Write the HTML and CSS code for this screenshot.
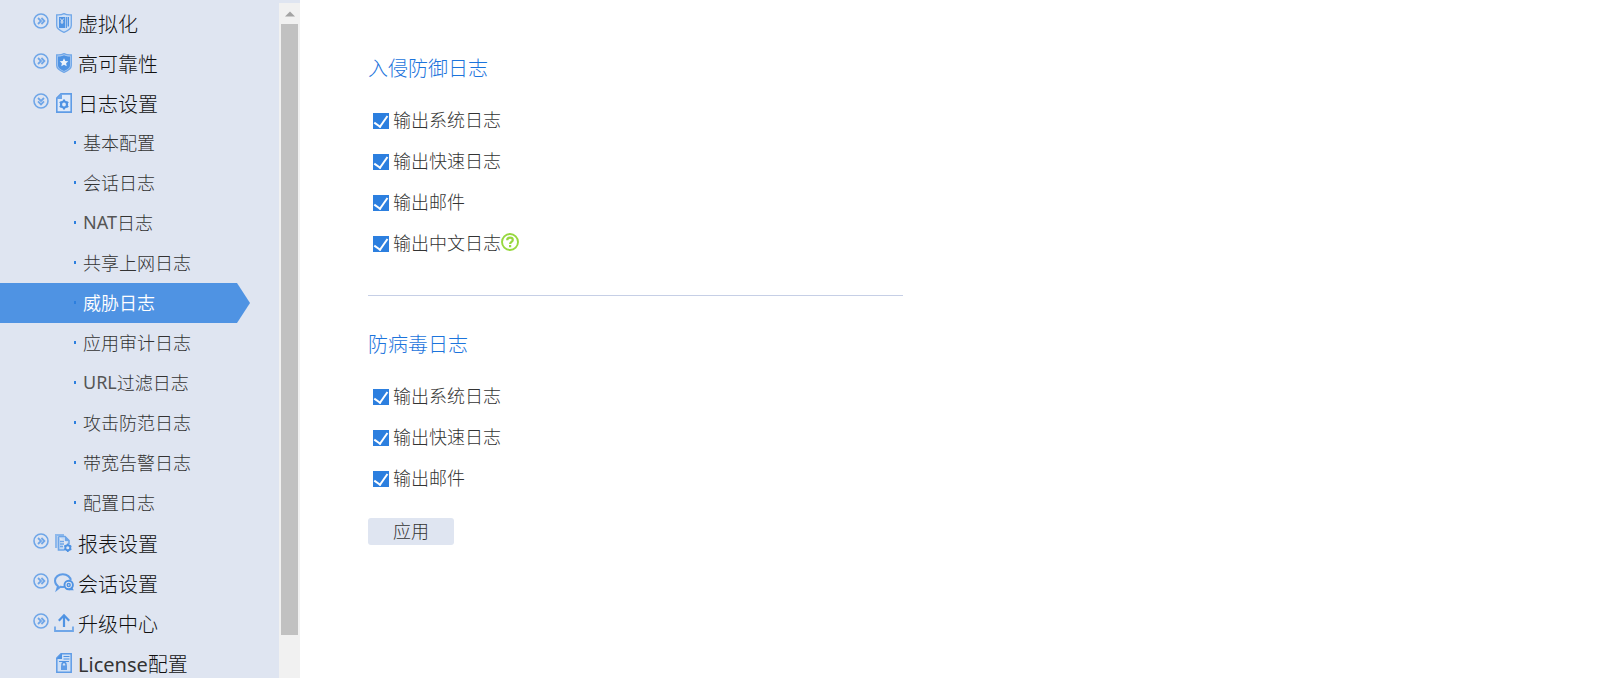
FILE: index.html
```html
<!DOCTYPE html>
<html lang="zh-CN">
<head>
  <meta charset="UTF-8">
  <meta name="viewport" content="width=device-width, initial-scale=1.0">
  <title>威胁日志</title>
  <link rel="stylesheet" href="styles.css">
</head>
<body>
  <!-- shared icons -->
  <svg class="defs" aria-hidden="true">
    <symbol id="more" viewBox="0 0 16 16">
      <circle cx="8" cy="8" r="7" fill="none" stroke="currentColor" stroke-width="1.600"/>
      <path d="M5 5l3 3-3 3M8.400 5l3 3-3 3" fill="none" stroke="currentColor" stroke-width="1.800"/>
    </symbol>
  </svg>

  <div class="page">
    <aside class="sidebar">
      <nav class="menu">
        <ul>
          <li><a class="group" href="#">
            <svg class="arrow"><use href="#more"/></svg>
            <svg class="icon" viewBox="0 0 20 20"><path d="M10 .7c2.400 1.200 4.800 1.400 7.300 1.200v10.600c0 3.200-3.600 5.400-7.300 6.900-3.700-1.500-7.300-3.700-7.300-6.900V1.900C5.200 2.100 7.600 1.900 10 .7z" fill="#cfe0f6" stroke="#6fa6e8" stroke-width="1.300"/><path d="M5 4h6v11H5zM11.700 4h1.200v11h-1.200zM13.600 4H15v9.500h-1.400z" fill="#4f93e3"/><path d="M6.300 5.500L8 8l1.700-2.500M8 8v3M6.500 9h3" stroke="#dfe5f1" fill="none"/></svg>
            <span>虚拟化</span></a></li>
          <li><a class="group" href="#">
            <svg class="arrow"><use href="#more"/></svg>
            <svg class="icon" viewBox="0 0 20 20"><path d="M10 .7c2.400 1.200 4.800 1.400 7.300 1.200v10.600c0 3.200-3.600 5.400-7.300 6.900-3.700-1.500-7.300-3.700-7.300-6.900V1.900C5.200 2.100 7.600 1.900 10 .7z" fill="#b5d0f2" stroke="#6fa6e8" stroke-width="1.300"/><path d="M10 2.200c2 .9 4 1.200 6 1.200v9c0 2.400-2.800 4.200-6 5.600-3.200-1.400-6-3.200-6-5.600v-9c2 0 4-.3 6-1.200z" fill="#4f93e3"/><path d="M10 5.200l1.300 2.800 3 .3-2.200 2 .6 3-2.700-1.500-2.700 1.500.6-3-2.200-2 3-.3z" fill="#edf3fb"/></svg>
            <span>高可靠性</span></a></li>
          <li><a class="group" href="#">
            <svg class="arrow open"><use href="#more"/></svg>
            <svg class="icon" viewBox="0 0 20 20"><path d="M7 .9h10.200v18.200H2.800V5z" fill="#dfeafa" stroke="#5f9ce6" stroke-width="1.600"/><path d="M2.300 6L8 .3V6z" fill="#6fa6e8"/><circle cx="10" cy="11.500" r="3" fill="none" stroke="#4f93e3" stroke-width="2.200"/><path d="M10 6.500v2M10 14.500v2M5.700 9l1.700 1M12.600 13l1.700 1M5.700 14l1.700-1M12.600 10l1.700-1" stroke="#4f93e3" stroke-width="2"/></svg>
            <span>日志设置</span></a>
            <ul class="sub">
              <li><a href="#">基本配置</a></li>
              <li><a href="#">会话日志</a></li>
              <li><a href="#"><span class="latin">NAT</span>日志</a></li>
              <li><a href="#">共享上网日志</a></li>
              <li><a class="active" href="#">威胁日志</a></li>
              <li><a href="#">应用审计日志</a></li>
              <li><a href="#"><span class="latin">URL</span>过滤日志</a></li>
              <li><a href="#">攻击防范日志</a></li>
              <li><a href="#">带宽告警日志</a></li>
              <li><a href="#">配置日志</a></li>
            </ul>
          </li>
          <li><a class="group" href="#">
            <svg class="arrow"><use href="#more"/></svg>
            <svg class="icon" viewBox="0 0 20 20"><path d="M1 1h9v2H3.200v12H1z" fill="#8db8ec"/><path d="M4.500 3.500h6.500l4 4v3.500M4.500 3.500v13.500h6" fill="#c4daf5" stroke="#6fa6e8" stroke-width="1.600"/><path d="M11 3v5h4.500z" fill="#6fa6e8"/><path d="M6 8.500h4M6 11h4M6 13.500h3" stroke="#6fa6e8" stroke-width="1.300"/><circle cx="13.800" cy="14.700" r="2.500" fill="#dfe5f1" stroke="#4f93e3" stroke-width="1.900"/><path d="M13.800 10.500v1.700M13.800 17.200v1.700M10.200 12.600l1.300.8M16 15.900l1.300.8M10.200 16.700l1.300-.8M16 13.500l1.300-.8" stroke="#4f93e3" stroke-width="1.700"/></svg>
            <span>报表设置</span></a></li>
          <li><a class="group" href="#">
            <svg class="arrow"><use href="#more"/></svg>
            <svg class="icon" viewBox="0 0 20 20"><path d="M10.500 13.700c-1.300.3-2.700.4-4.200.1L3 16.500l1-3.300C2 11.800 1 10 1 7.800 1 4 4.500 1.300 8.800 1.300c4.400 0 7.900 2.700 7.900 6.200" fill="none" stroke="#5f9ce6" stroke-width="2"/><circle cx="14.700" cy="12" r="4.200" fill="#dfe5f1" stroke="#4f93e3" stroke-width="1.900"/><circle cx="14.700" cy="12" r="1.500" fill="none" stroke="#4f93e3" stroke-width="1.400"/><path d="M17.500 13.500l2.300 3.800h-5z" fill="#4f93e3"/></svg>
            <span>会话设置</span></a></li>
          <li><a class="group" href="#">
            <svg class="arrow"><use href="#more"/></svg>
            <svg class="icon" viewBox="0 0 20 20"><path d="M10 14V2.500M4.800 7.700L10 2.300l5.200 5.400" fill="none" stroke="#4f93e3" stroke-width="2.200"/><path d="M1 13.500v4.500h18v-4.500" fill="none" stroke="#6fa6e8" stroke-width="1.800"/></svg>
            <span>升级中心</span></a></li>
          <li><a class="group" href="#">
            <span class="arrow"></span>
            <svg class="icon" viewBox="0 0 20 20"><path d="M7 .8h10.200v18.400H2.800V5z" fill="#cfe0f6" stroke="#5f9ce6" stroke-width="1.500"/><path d="M2.300 6L8 .3V6z" fill="#4f93e3"/><path d="M9.500 3.500h6M9.500 6h6M5 8.500h10" stroke="#4f93e3" stroke-width="1.200"/><path d="M8 13v-1.500a2 2 0 0 1 4 0V13" fill="none" stroke="#4f93e3" stroke-width="1.400"/><path d="M7 12.500h6V17H7z" fill="#5f9ce6"/></svg>
            <span><span class="latin">License</span>配置</span></a></li>
        </ul>
      </nav>
      <div class="scrollbar">
        <svg class="up" viewBox="0 0 10 6"><path d="M0 5.500L5 .5l5 5z" fill="#a3a3a3"/></svg>
        <div class="thumb"></div>
      </div>
    </aside>

    <main class="content">
      <form>
        <section class="logs">
          <h2>入侵防御日志</h2>
          <div class="check"><input type="checkbox" id="ipsSys" checked><label for="ipsSys">输出系统日志</label></div>
          <div class="check"><input type="checkbox" id="ipsFast" checked><label for="ipsFast">输出快速日志</label></div>
          <div class="check"><input type="checkbox" id="ipsMail" checked><label for="ipsMail">输出邮件</label></div>
          <div class="check"><input type="checkbox" id="ipsCn" checked><label for="ipsCn">输出中文日志</label>
            <svg class="help" viewBox="0 0 18 18"><circle cx="9" cy="9" r="8" fill="none" stroke="#97d83f" stroke-width="1.900"/><path d="M6.200 7.200c0-1.600 1.100-2.600 2.800-2.600s2.800.9 2.800 2.300c0 1.900-2.700 2-2.700 4M9.100 12v2.200" fill="none" stroke="#97d83f" stroke-width="2.200"/></svg>
          </div>
        </section>
        <hr>
        <section class="logs">
          <h2>防病毒日志</h2>
          <div class="check"><input type="checkbox" id="avSys" checked><label for="avSys">输出系统日志</label></div>
          <div class="check"><input type="checkbox" id="avFast" checked><label for="avFast">输出快速日志</label></div>
          <div class="check"><input type="checkbox" id="avMail" checked><label for="avMail">输出邮件</label></div>
        </section>
        <button type="button" class="apply">应用</button>
      </form>
    </main>
  </div>
</body>
</html>
```

FILE: styles.css
```css
* { box-sizing: border-box; }
body { margin: 0; background: #fff; color: #333; font-family: "Noto Sans", "Noto Sans CJK SC", sans-serif; font-weight: 300; font-size: 18px; }
ul { list-style: none; margin: 0; padding: 0; }
a { color: inherit; text-decoration: none; }
.defs { display: none; }
.latin { font-weight: 400; color: #333; }
.page { display: flex; height: 100vh; overflow: hidden; }

/* left menu */
.sidebar { display: flex; flex: none; width: 300px; padding-top: 3px; background: #dfe5f1; }
.menu { flex: 1; overflow: hidden; }
.group { display: flex; align-items: center; height: 40px; padding-left: 33px; font-size: 20px; color: #111; }
.arrow { flex: none; width: 16px; height: 16px; margin: 0 5px 5px 0; color: #6fa6e8; }
.arrow.open { transform: rotate(90deg); }
.icon { flex: none; width: 20px; height: 20px; margin-right: 4px; }
.sub a { display: flex; align-items: center; width: 250px; height: 40px; padding: 0 0 3px 74px; }
.sub a::before { content: ""; width: 2px; height: 3px; margin: 2px 7px 0 0; background: #2c7fdf; }
.sub a.active { background: #4f93e3; color: #fff; font-weight: 350; clip-path: polygon(0 0, 237px 0, 100% 50%, 237px 100%, 0 100%); }
.sub .latin { color: #555; }

.scrollbar { display: flex; flex-direction: column; align-items: center; width: 21px; background: #f1f1f1; }
.up { flex: none; width: 10px; height: 6px; margin: 8px 0 7px; }
.thumb { width: 17px; height: 90.5%; background: #c1c1c1; }

/* settings */
.content { flex: 1; padding: 49px 68px; }
.logs h2 { margin: 0 0 11px; font-size: 20px; line-height: 40px; font-weight: 300; color: #1c74dc; }
.check { display: flex; align-items: center; height: 41px; padding-left: 5px; }
.check input { appearance: none; display: grid; place-content: center; width: 16px; height: 16px; margin: 0 4px 0 0; background: #2c7fdf; }
.check input:checked::after { content: ""; width: 6px; height: 12px; margin-bottom: 2px; border: solid #fff; border-width: 0 2px 2px 0; transform: rotate(35deg); }
.check label { padding-bottom: 3px; }
.help { width: 18px; height: 18px; margin-bottom: 3px; }
hr { width: 535px; max-width: 100%; height: 1px; margin: 31px 0 29px; border: 0; background: #c6cfe6; }
.apply { width: 86px; height: 27px; margin-top: 19px; padding: 0; border: 0; border-radius: 3px; background: #dfe5f1; color: #333; font: inherit; line-height: 27px; cursor: pointer; }
```
